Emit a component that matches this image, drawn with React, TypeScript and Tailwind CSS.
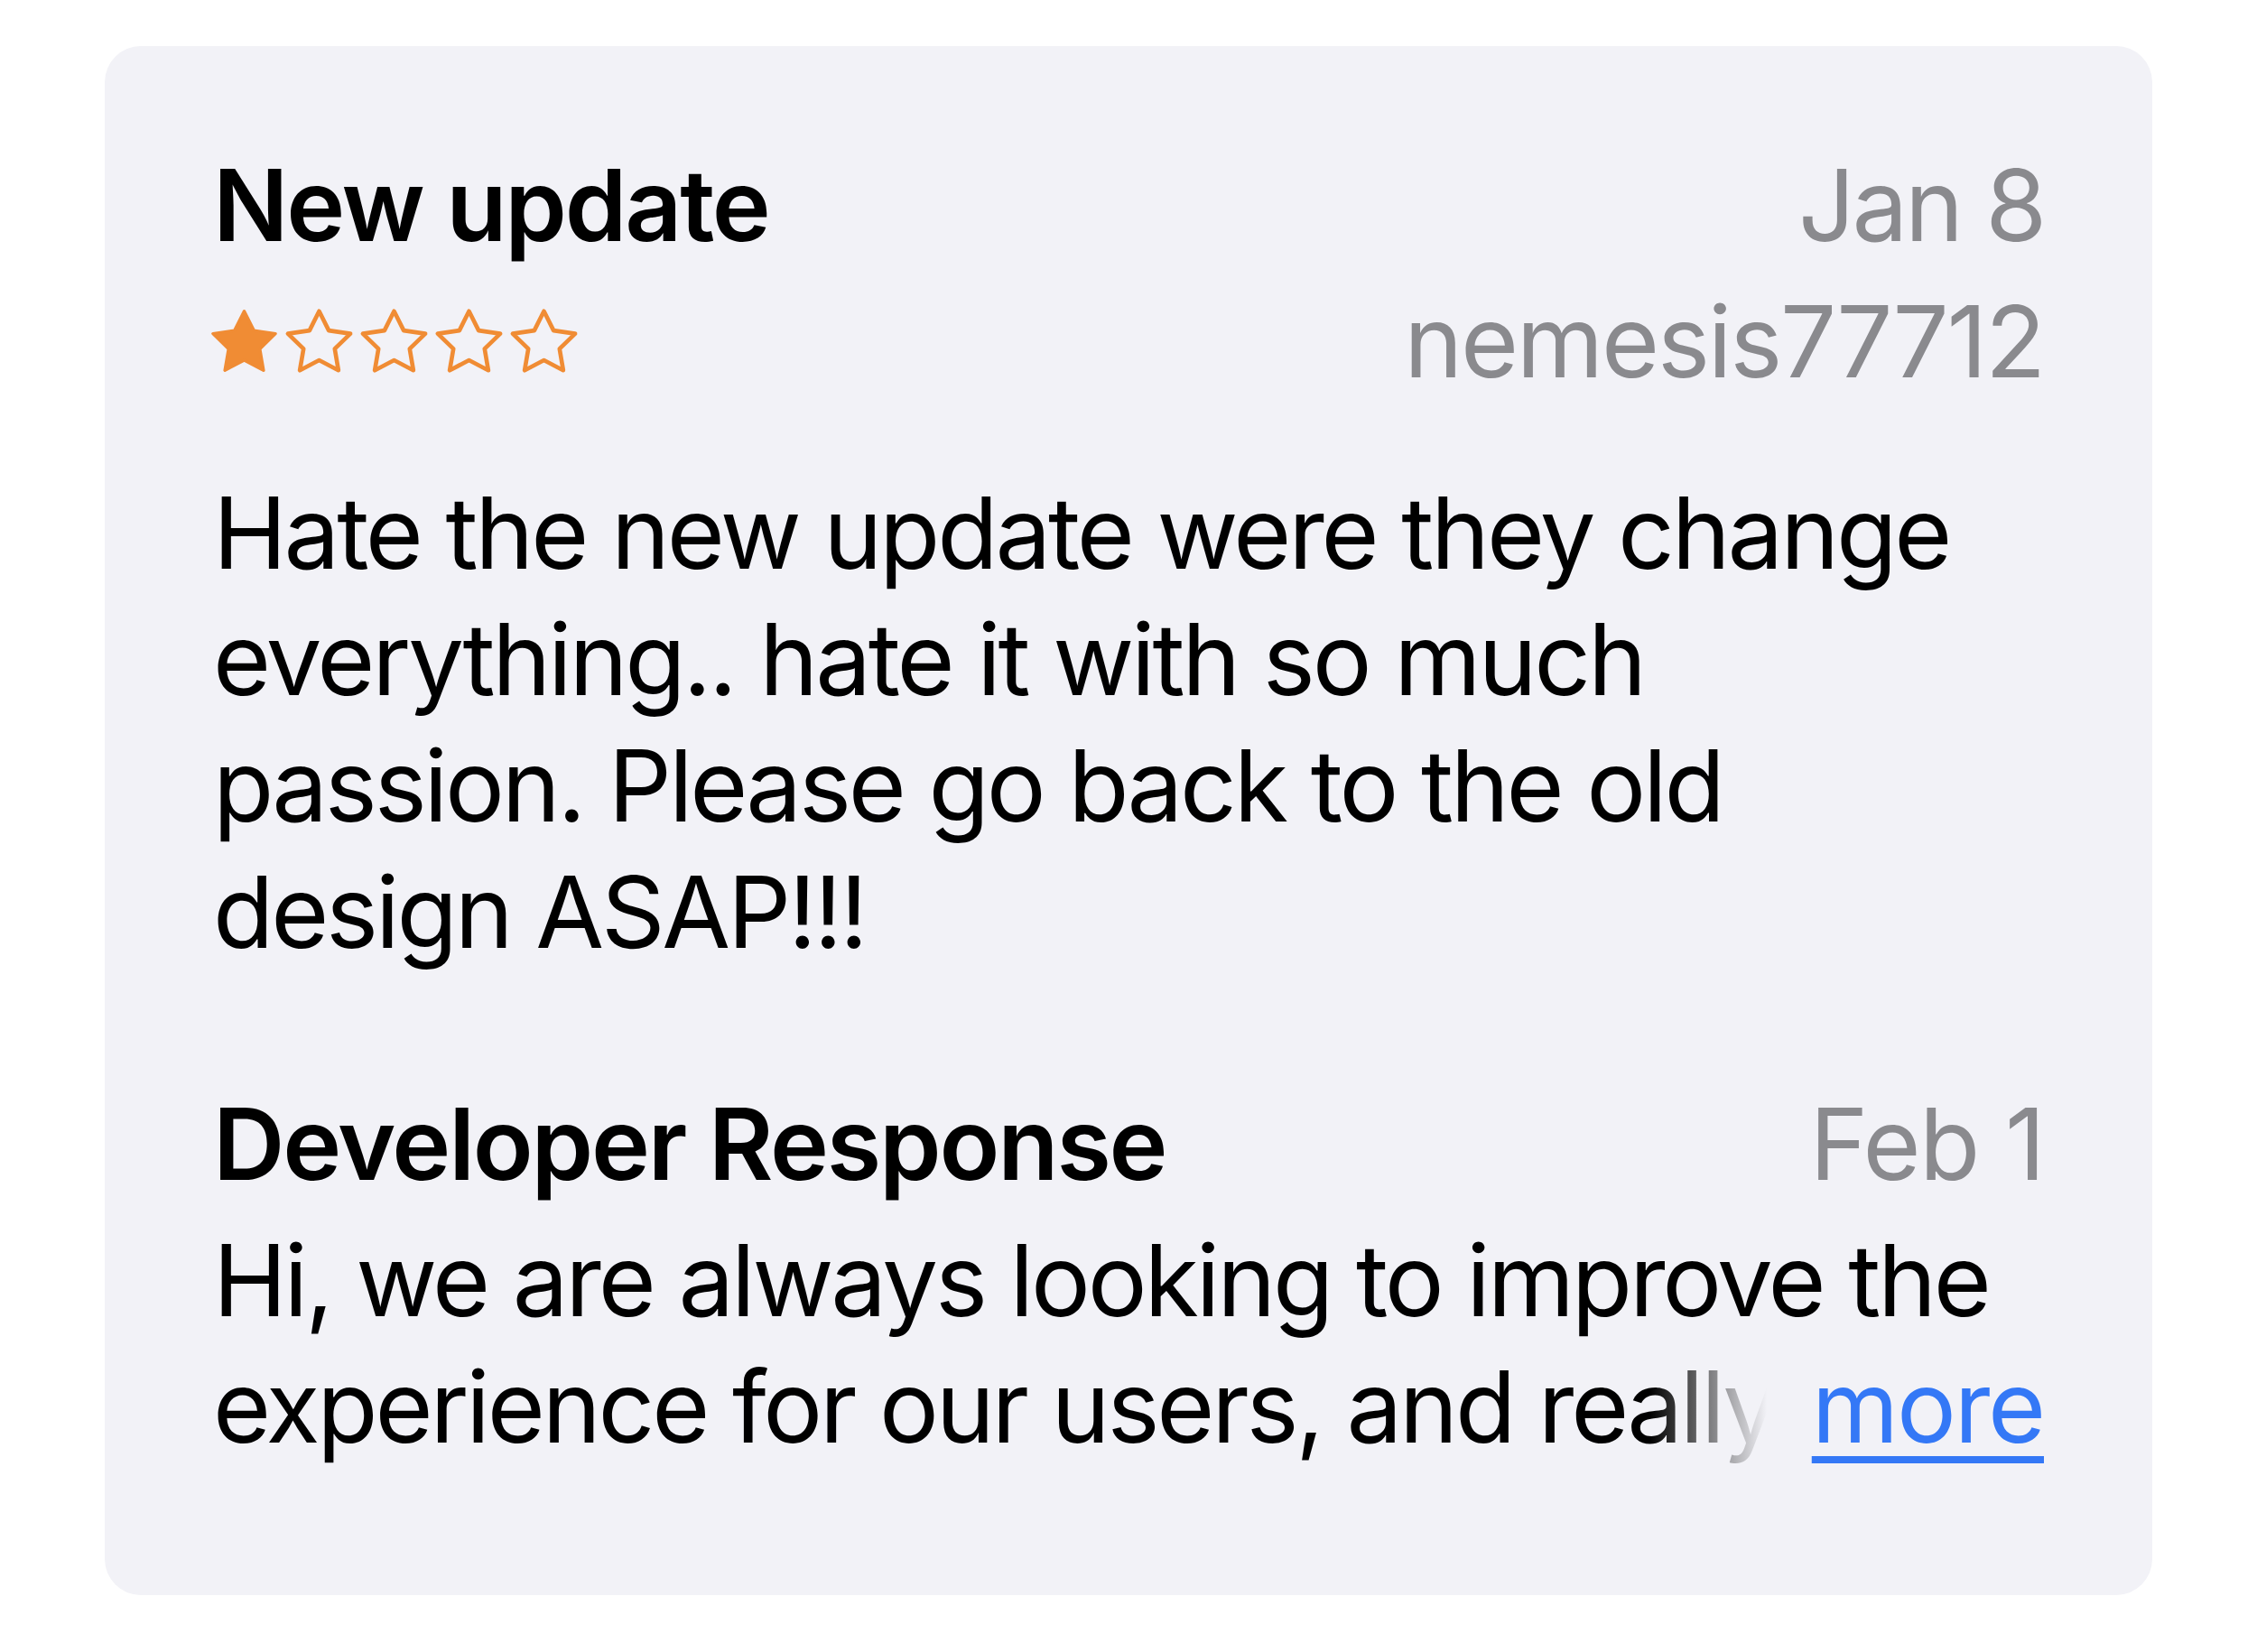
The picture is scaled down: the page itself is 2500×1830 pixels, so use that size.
import React from 'react';

const font = { fontFamily: 'Inter, "Noto Sans", sans-serif' };

const Star: React.FC<{ filled?: boolean }> = ({ filled }) => (
  <svg width="83" height="84" viewBox="0 0 24 24" className="block">
    <polygon
      points="12,2.4 15.09,8.56 22,9.57 17,14.44 18.18,21.32 12,18.07 5.82,21.32 7,14.44 2,9.57 8.91,8.56"
      fill={filled ? '#f08c34' : 'none'}
      stroke="#f08c34"
      strokeWidth={filled ? 1 : 1.35}
      strokeLinejoin="round"
    />
  </svg>
);

const App: React.FC = () => {
  return (
    <div className="min-h-screen bg-white px-[116px] pt-[51px]" style={font}>
      {/* Review card */}
      <div className="rounded-[40px] bg-[#f2f2f7] pl-[120px] pr-[120px] pt-[106px] pb-[139px] text-black">
        {/* Title + date */}
        <div className="flex items-baseline justify-between leading-[140px]">
          <h2 className="text-[110px] font-semibold tracking-[-0.02em]">New update</h2>
          <span className="text-[110px] text-[#8a8a8e] tracking-[-0.03em]">Jan 8</span>
        </div>

        {/* Stars + author */}
        <div className="mt-[11px] flex items-center justify-between leading-[140px]">
          <div className="-ml-[7px] flex">
            <Star filled />
            <Star />
            <Star />
            <Star />
            <Star />
          </div>
          <span className="text-[110px] text-[#8a8a8e] tracking-[-0.02em]">nemesis77712</span>
        </div>

        {/* Review body */}
        <p className="mt-[72px] max-w-[1960px] text-[110px] leading-[140px] tracking-[-0.029em]">
          Hate the new update were they change everything.. hate it with so much passion. Please go back to the old design ASAP!!!
        </p>

        {/* Developer response */}
        <div className="mt-[117px] flex items-baseline justify-between leading-[140px]">
          <h3 className="text-[110px] font-semibold tracking-[-0.02em]">Developer Response</h3>
          <span className="text-[110px] text-[#8a8a8e] tracking-[-0.015em]">Feb 1</span>
        </div>
        <div className="relative mt-[11px]">
          <p className="line-clamp-2 text-[110px] leading-[140px] tracking-[-0.029em]">
            Hi, we are always looking to improve the experience for our users, and really appreciate you taking the time to share your thoughts with us.
          </p>
          <span className="absolute right-0 bottom-0 bg-[linear-gradient(to_right,rgba(242,242,247,0),#f2f2f7_130px)] pl-[180px] text-[110px] leading-[140px] tracking-[-0.02em]">
            <a href="#" className="text-[#3478f6] underline decoration-[8px] underline-offset-[15px]">
              more
            </a>
          </span>
        </div>
      </div>
    </div>
  );
};

export default App;
